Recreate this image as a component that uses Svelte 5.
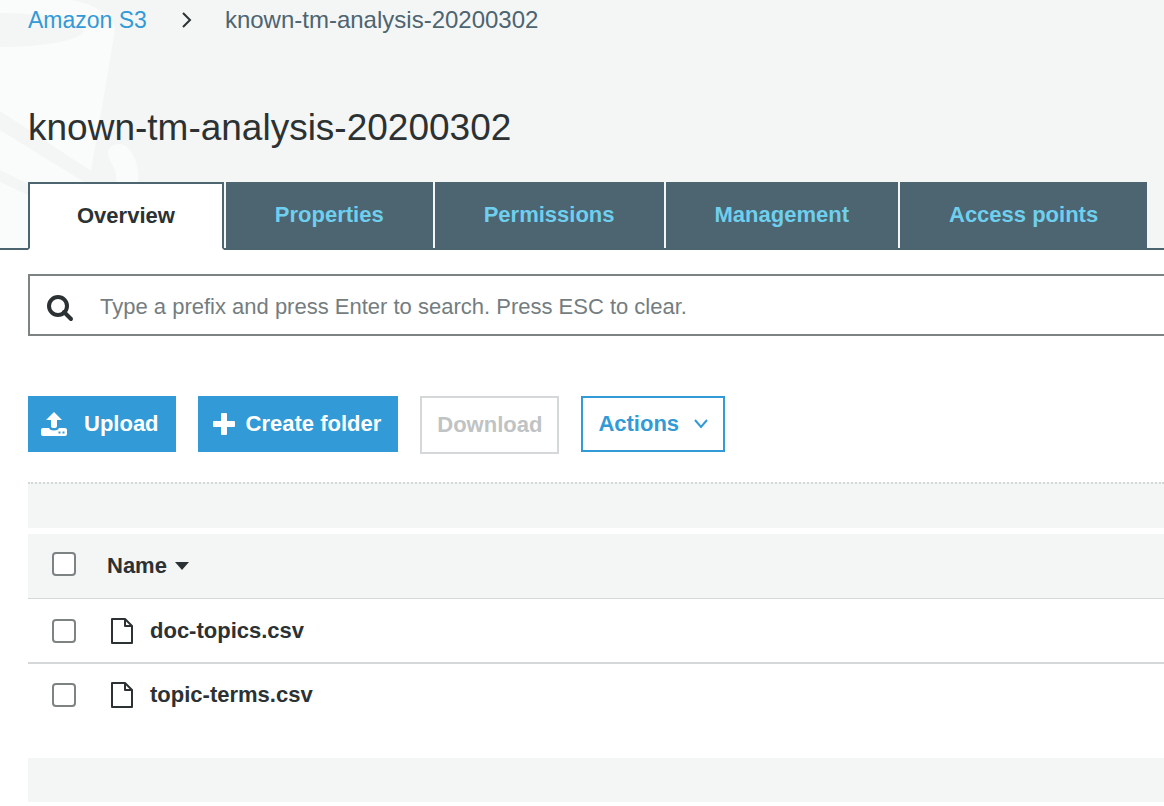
<script lang="ts">
  const bucket = 'known-tm-analysis-20200302';
  const tabs = ['Overview', 'Properties', 'Permissions', 'Management', 'Access points'];
  const files = ['doc-topics.csv', 'topic-terms.csv'];
  let active = $state('Overview');
  let query = $state('');
</script>

<header>
  <svg class="watermark" width="160" height="248" viewBox="0 0 160 248" aria-hidden="true">
    <path fill="#fafbfb" fill-rule="evenodd" d="M0 0H72C96 5 114 16 115 30L91 171L0 111ZM0 13C42 13 78 20 84 31C79 41 42 47 0 47Z" />
    <path fill="#fafbfb" d="M0 130L84 182L28 184L0 170Z" />
    <path fill="#fafbfb" d="M0 182L28 195V248H0Z" />
    <path fill="#fafbfb" d="M108 154C108 144 120 141 127 147C136 156 139 169 138 182H116C118 168 110 165 108 154Z" />
  </svg>
  <nav class="crumbs" aria-label="Breadcrumb">
    <a href="#s3">Amazon S3</a>
    <svg width="12" height="18" viewBox="0 0 12 18" fill="none" stroke="#2c3233" stroke-width="2" aria-hidden="true"><path d="M2 2L9 9L2 16" /></svg>
    <span>{bucket}</span>
  </nav>
  <h1>{bucket}</h1>
  <div class="tabs" role="tablist">
    {#each tabs as tab}
      <button role="tab" class:active={active === tab} aria-selected={active === tab} onclick={() => (active = tab)}>{tab}</button>
    {/each}
  </div>
</header>

<main>
  <label class="search">
    <svg width="28" height="28" viewBox="0 0 28 28" fill="none" stroke="#2c3233" aria-hidden="true">
      <circle cx="12" cy="12" r="9" stroke-width="4" /><path d="M18 18L25 25" stroke-width="4" stroke-linecap="round" />
    </svg>
    <input type="text" aria-label="Search" bind:value={query} placeholder="Type a prefix and press Enter to search. Press ESC to clear." />
  </label>

  <div class="actions">
    <button class="primary upload">
      <svg width="28" height="26" viewBox="0 0 28 26" fill="#fff" aria-hidden="true">
        <path d="M14 1L22 9H17V15Q17 17 15 17H13Q11 17 11 15V9H6Z" />
        <path fill-rule="evenodd" d="M3 17H9Q10 19.500 14 19.500T19 17H25Q27 17 27 19V23Q27 25 25 25H3Q1 25 1 23V19Q1 17 3 17ZM18.500 20.500V22.500H20.500V20.500ZM22.500 20.500V22.500H24.500V20.500Z" />
      </svg>
      Upload
    </button>
    <button class="primary create">
      <svg width="22" height="22" viewBox="0 0 22 22" fill="#fff" aria-hidden="true"><path d="M9 0H13Q14 0 14 1V8H21Q22 8 22 9V13Q22 14 21 14H14V21Q14 22 13 22H9Q8 22 8 21V14H1Q0 14 0 13V9Q0 8 1 8H8V1Q8 0 9 0Z" /></svg>
      Create folder
    </button>
    <button class="download" disabled>Download</button>
    <button class="menu">
      Actions
      <svg width="14" height="10" viewBox="0 0 14 10" fill="none" stroke="#329ad6" stroke-width="2" aria-hidden="true"><path d="M1 1L7 8L13 1" /></svg>
    </button>
  </div>

  <div class="band top"></div>
  <table>
    <thead>
      <tr>
        <th class="pick"><input type="checkbox" aria-label="Select all" /></th>
        <th class="name">
          <div class="cell heading">Name
            <svg width="14" height="8" viewBox="0 0 14 8" fill="#2c3233" aria-hidden="true"><path d="M0 0H14L7 8Z" /></svg>
          </div>
        </th>
      </tr>
    </thead>
    <tbody>
      {#each files as file}
        <tr>
          <td class="pick"><input type="checkbox" aria-label={file} /></td>
          <td class="name">
            <div class="cell">
              <svg class="file" width="22" height="26" viewBox="0 0 22 26" fill="none" stroke="#2c3233" stroke-width="2" stroke-linejoin="round" aria-hidden="true">
                <path d="M1 1H14L21 8V25H1Z" /><path d="M14 1V8H21" />
              </svg>
              {file}
            </div>
          </td>
        </tr>
      {/each}
    </tbody>
  </table>
  <div class="band bottom"></div>
</main>

<style>
  :global(body) {
    margin: 0;
    background: #fff;
    color: #2c3233;
    font: 22px/28px "Liberation Sans", Arial, sans-serif;
    overflow-x: hidden;
  }
  header {
    position: relative;
    background: #f4f6f6;
    border-bottom: 2px solid #4d6471;
  }
  .watermark {
    position: absolute;
    left: 0;
    top: 0;
  }
  .crumbs {
    position: relative;
    display: flex;
    align-items: center;
    padding: 6px 28px 0;
    font-size: 24px;
    color: #4d6471;
  }
  .crumbs svg { margin: 0 32px 0 34px; }
  .crumbs a {
    color: #329ad6;
    font-size: 23px;
    text-decoration: none;
  }
  h1 {
    position: relative;
    margin: 0;
    padding: 72px 28px 32px;
    font-size: 37px;
    line-height: 44px;
    font-weight: 400;
  }
  .tabs {
    position: relative;
    display: flex;
    gap: 2px;
    padding-left: 28px;
    margin-bottom: -2px;
  }
  button {
    font: inherit;
    font-weight: 700;
    white-space: nowrap;
  }
  .tabs button {
    height: 68px;
    padding: 0 49px 2px;
    border: 0;
    background: #4d6471;
    color: #6fcfee;
  }
  .tabs .active {
    padding: 0 47px;
    border: 2px solid #4d6471;
    border-bottom-color: #fff;
    background: #fff;
    color: #2c3233;
  }
  main { padding: 24px 0 0 28px; }
  .search {
    display: flex;
    align-items: center;
    height: 58px;
    border: 2px solid #7d8282;
    border-right: 0;
    padding-left: 16px;
    gap: 26px;
  }
  .search svg { margin-top: 6px; }
  .search input {
    flex: 1;
    border: 0;
    outline: 0;
    padding: 4px 0 0;
    background: none;
    color: inherit;
    font: inherit;
  }
  .search input::placeholder {
    color: #747d80;
    opacity: 1;
  }
  .actions {
    display: flex;
    align-items: flex-start;
    gap: 22px;
    padding: 60px 0 28px;
  }
  .actions button {
    display: flex;
    align-items: center;
    height: 56px;
    border: 2px solid #329ad6;
    padding: 0 15px;
  }
  .actions .primary {
    background: #329ad6;
    color: #fff;
  }
  .actions .upload { gap: 16px; padding-left: 10px; }
  .actions .create { gap: 11px; padding-left: 13px; }
  .actions .download {
    height: 58px;
    border-color: #d5d8d9;
    background: #fff;
    color: #bfc3c4;
  }
  .actions .menu {
    gap: 15px;
    background: #fff;
    color: #329ad6;
  }
  .band {
    height: 44px;
    background: #f4f6f6;
  }
  .top {
    border-top: 2px dotted #d5d8d8;
    margin-bottom: 6px;
  }
  .bottom { margin: 32px 0 4px; }
  table {
    width: 100%;
    border-collapse: separate;
    border-spacing: 0;
  }
  th, td {
    height: 63px;
    padding: 0;
    text-align: left;
    font-weight: 700;
    border-bottom: 2px solid #d5d8d8;
  }
  th {
    height: 64px;
    background: #f4f6f6;
    border-bottom-width: 1px;
  }
  tbody tr:last-child td {
    height: 62px;
    border-bottom: 0;
  }
  .pick {
    width: 79px;
    box-sizing: border-box;
    padding-left: 24px;
  }
  th.pick { padding-bottom: 4px; }
  .pick input {
    display: block;
    appearance: none;
    box-sizing: border-box;
    width: 24px;
    height: 24px;
    margin: 0;
    border: 2px solid #7d8282;
    border-radius: 4px;
    background: #fff;
  }
  .pick input:checked { background: #329ad6; }
  .cell {
    display: flex;
    align-items: center;
    gap: 17px;
    padding-left: 4px;
  }
  .heading {
    gap: 8px;
    padding-left: 0;
  }
</style>
